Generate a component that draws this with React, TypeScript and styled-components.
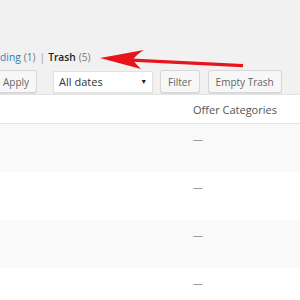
import React from "react";
import styled, { createGlobalStyle } from "styled-components";

const Global = createGlobalStyle`
  html, body { margin: 0; padding: 0; }
  body {
    background: #f1f1f1;
    font-family: "Open Sans", "Noto Sans", "Liberation Sans", sans-serif;
    font-size: 10px;
    color: #444;
  }
`;

const Page = styled.div`
  position: relative;
  width: 300px;
  height: 300px;
  overflow: hidden;
  background: #f1f1f1;
`;

const StatusList = styled.ul`
  list-style: none;
  margin: 49px 0 0 -18px;
  padding: 0;
  display: flex;
  align-items: center;
  height: 16px;
  line-height: 16px;
  white-space: nowrap;
  color: #666;
  font-size: 10.2px;
`;

const StatusItem = styled.li`
  display: flex;
  align-items: center;
`;

const StatusLink = styled.a<{ $current?: boolean }>`
  color: ${(p) => (p.$current ? "#222" : "#2a7cb0")};
  font-weight: ${(p) => (p.$current ? 600 : 400)};
  text-decoration: none;
`;

const Count = styled.span`
  color: #777;
  margin-left: 3px;
`;

const Sep = styled.span`
  color: #999;
  margin: 0 3px 0 4px;
`;

const Toolbar = styled.div`
  display: flex;
  align-items: center;
  margin: 5px 0 0 -5px;
  height: 23px;
  white-space: nowrap;
`;

const Button = styled.button<{ $gap?: number }>`
  height: 23px;
  margin-left: ${(p) => p.$gap ?? 0}px;
  padding: 0 7px;
  font: inherit;
  font-size: 10px;
  color: #666;
  background: #f7f7f7;
  border: 1px solid #d6d6d6;
  border-radius: 3px;
  box-shadow: 0 1px 0 #dcdcdc;
  cursor: pointer;
`;

const Select = styled.div`
  display: flex;
  align-items: center;
  justify-content: space-between;
  box-sizing: border-box;
  width: 100px;
  height: 22px;
  margin-left: 16px;
  padding: 0 5px;
  background: #fff;
  border: 1px solid #e2e2e2;
  box-shadow: 0 1px 1px rgba(0, 0, 0, 0.05);
  color: #333;
  font-size: 11px;
`;

const Caret = styled.span`
  font-size: 7px;
  color: #222;
`;

const Table = styled.div`
  margin-top: 1px;
  border-top: 1px solid #e4e4e4;
  background: #fff;
`;

const HeaderRow = styled.div`
  display: grid;
  grid-template-columns: 193px 1fr;
  height: 28px;
  align-items: center;
  border-bottom: 1px solid #e4e4e4;
  color: #555;
  font-size: 11px;
`;

const Row = styled.div<{ $alt?: boolean }>`
  display: grid;
  grid-template-columns: 193px 1fr;
  height: 48px;
  background: ${(p) => (p.$alt ? "#f9f9f9" : "#fff")};
`;

const Cell = styled.div`
  padding-top: 7px;
  line-height: 16px;
  font-size: 10px;
  color: #999;
`;

const Arrow = styled.svg`
  position: absolute;
  left: 0;
  top: 0;
  pointer-events: none;
`;

export default function App() {
  const rows = [true, false, true, false];
  return (
    <Page>
      <Global />
      <StatusList>
        <StatusItem>
          <StatusLink href="#">Pending</StatusLink>
          <Count>(1)</Count>
          <Sep>|</Sep>
        </StatusItem>
        <StatusItem>
          <StatusLink href="#" $current>
            Trash
          </StatusLink>
          <Count>(5)</Count>
        </StatusItem>
      </StatusList>
      <Toolbar>
        <Button>Apply</Button>
        <Select>
          <span>All dates</span>
          <Caret>▼</Caret>
        </Select>
        <Button $gap={7}>Filter</Button>
        <Button $gap={8}>Empty Trash</Button>
      </Toolbar>
      <Table>
        <HeaderRow>
          <span />
          <span>Offer Categories</span>
        </HeaderRow>
        {rows.map((alt, i) => (
          <Row key={i} $alt={alt}>
            <span />
            <Cell>—</Cell>
          </Row>
        ))}
      </Table>
      <Arrow width="300" height="300" viewBox="0 0 300 300">
        <path d="M243 64 L132 58.5 L132 61.8 L243 67.2 Z" fill="#e8141b" />
        <path
          d="M100 58 L144 50 C139 53 135 56 133 60 C135 63 138 66 141 69 Z"
          fill="#e8141b"
        />
      </Arrow>
    </Page>
  );
}
